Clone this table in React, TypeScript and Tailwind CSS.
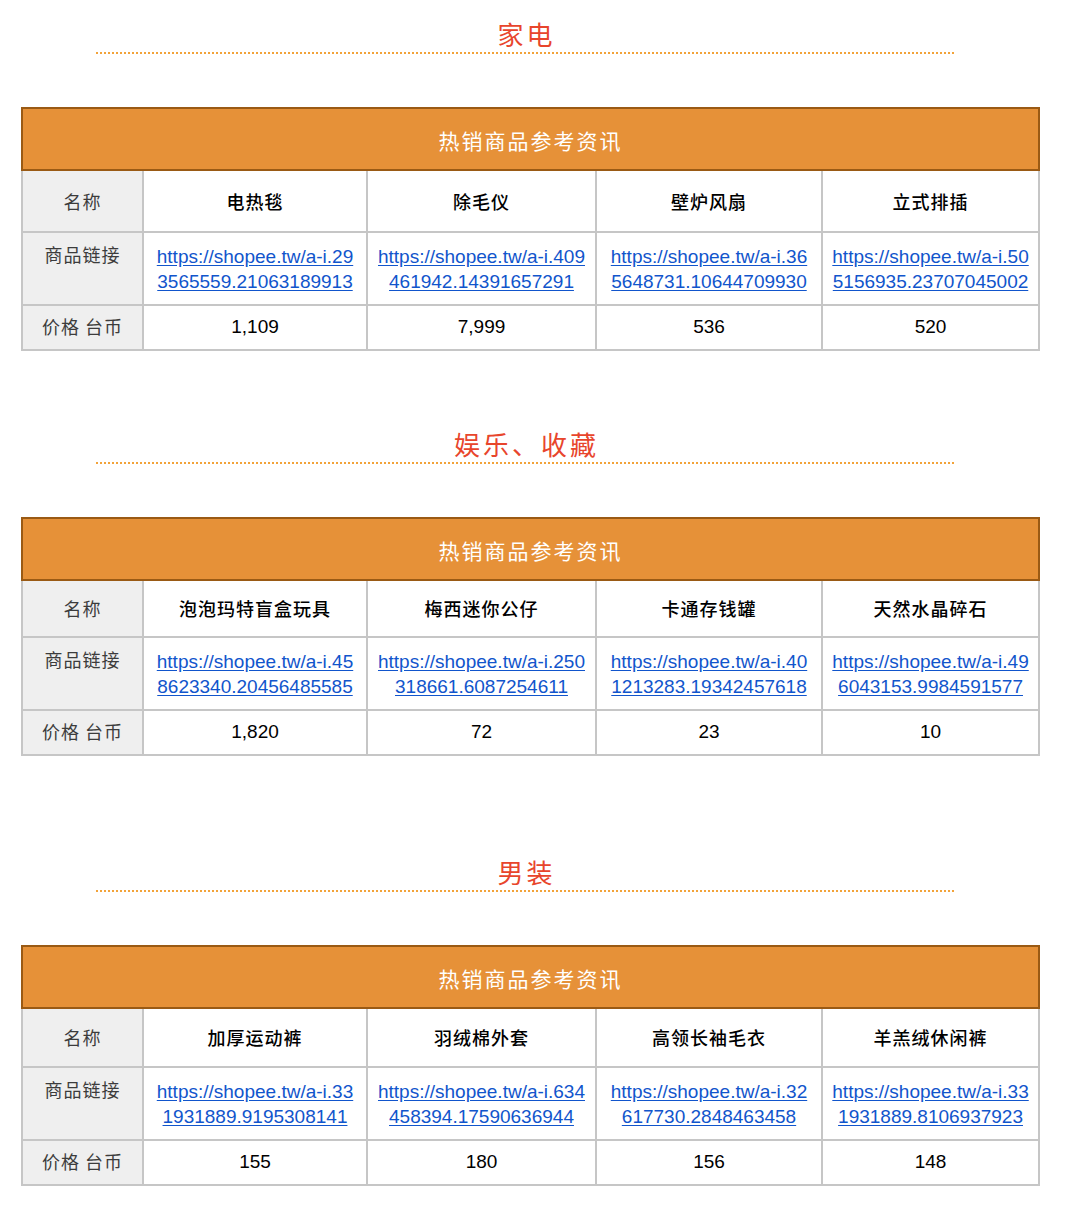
type Item = {
  name: string;
  link: [string, string];
  price: string;
};

type Section = {
  title: string;
  mt: string;
  nameH: string;
  items: Item[];
};

const sections: Section[] = [
  {
    title: "家电",
    mt: "mt-[16px]",
    nameH: "h-[62px]",
    items: [
      { name: "电热毯", link: ["https://shopee.tw/a-i.29", "3565559.21063189913"], price: "1,109" },
      { name: "除毛仪", link: ["https://shopee.tw/a-i.409", "461942.14391657291"], price: "7,999" },
      { name: "壁炉风扇", link: ["https://shopee.tw/a-i.36", "5648731.10644709930"], price: "536" },
      { name: "立式排插", link: ["https://shopee.tw/a-i.50", "5156935.23707045002"], price: "520" },
    ],
  },
  {
    title: "娱乐、收藏",
    mt: "mt-[75px]",
    nameH: "h-[57px]",
    items: [
      { name: "泡泡玛特盲盒玩具", link: ["https://shopee.tw/a-i.45", "8623340.20456485585"], price: "1,820" },
      { name: "梅西迷你公仔", link: ["https://shopee.tw/a-i.250", "318661.6087254611"], price: "72" },
      { name: "卡通存钱罐", link: ["https://shopee.tw/a-i.40", "1213283.19342457618"], price: "23" },
      { name: "天然水晶碎石", link: ["https://shopee.tw/a-i.49", "6043153.9984591577"], price: "10" },
    ],
  },
  {
    title: "男装",
    mt: "mt-[98px]",
    nameH: "h-[59px]",
    items: [
      { name: "加厚运动裤", link: ["https://shopee.tw/a-i.33", "1931889.9195308141"], price: "155" },
      { name: "羽绒棉外套", link: ["https://shopee.tw/a-i.634", "458394.17590636944"], price: "180" },
      { name: "高领长袖毛衣", link: ["https://shopee.tw/a-i.32", "617730.2848463458"], price: "156" },
      { name: "羊羔绒休闲裤", link: ["https://shopee.tw/a-i.33", "1931889.8106937923"], price: "148" },
    ],
  },
];

const cjk = "font-['Noto_Sans_CJK_SC',sans-serif]";
const latin = "font-['Liberation_Sans',Arial,sans-serif]";
const cell = "border-2 border-[#c6c6c6] text-center align-middle p-0";
const label = `${cell} bg-[#efefef] text-[#3c3c3c] text-[18px] tracking-[1px] ${cjk}`;

function ProductTable({ section }: { section: Section }) {
  return (
    <table className="ml-[21px] mt-[53px] w-[1017px] table-fixed border-collapse">
      <colgroup>
        <col className="w-[121px]" />
        <col className="w-[224px]" />
        <col className="w-[229px]" />
        <col className="w-[226px]" />
        <col className="w-[217px]" />
      </colgroup>
      <thead>
        <tr>
          <th
            colSpan={5}
            className={`h-[62px] border-2 border-[#9a5a14] bg-[#e69138] pt-[3px] text-center align-middle text-[21px] font-normal tracking-[2px] text-white ${cjk}`}
          >
            热销商品参考资讯
          </th>
        </tr>
      </thead>
      <tbody>
        <tr>
          <td className={`${label} ${section.nameH}`}>名称</td>
          {section.items.map((item) => (
            <td
              key={item.name}
              className={`${cell} text-[18px] font-medium tracking-[1px] text-black ${cjk}`}
            >
              {item.name}
            </td>
          ))}
        </tr>
        <tr>
          <td className={`${label} h-[73px] align-top pt-[9px] leading-[25px]`}>商品链接</td>
          {section.items.map((item) => (
            <td key={item.link[1]} className={`${cell} ${latin} text-[19px] leading-[25px]`}>
              <a href="#" className="text-[#1155cc] underline underline-offset-2">
                {item.link[0]}
                <br />
                {item.link[1]}
              </a>
            </td>
          ))}
        </tr>
        <tr>
          <td className={`${label} h-[45px] pb-[2px]`}>价格 台币</td>
          {section.items.map((item) => (
            <td key={item.price} className={`${cell} ${latin} text-[19px] text-black`}>
              {item.price}
            </td>
          ))}
        </tr>
      </tbody>
    </table>
  );
}

export default function App() {
  return (
    <div className="min-h-[1215px] w-[1069px] bg-white pb-[28px]">
      {sections.map((section) => (
        <div key={section.title}>
          <div
            className={`${section.mt} ml-[96px] w-[858px] border-b-2 border-dotted border-[#f2a33a] text-center`}
          >
            <h2
              className={`pl-[3px] text-[26px] leading-[36px] font-normal tracking-[3px] text-[#e8452c] ${cjk}`}
            >
              {section.title}
            </h2>
          </div>
          <ProductTable section={section} />
        </div>
      ))}
    </div>
  );
}
